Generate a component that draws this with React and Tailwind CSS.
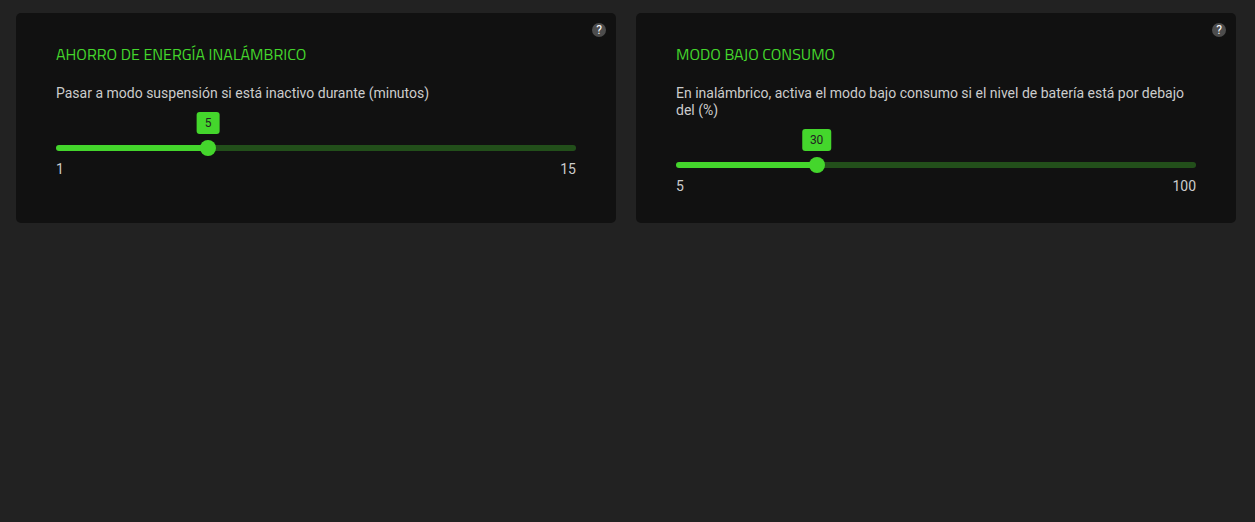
import { useState } from 'react';

const THUMB_SIZE = 16;

function HelpButton({ label }) {
  return (
    <button
      type="button"
      aria-label={label}
      className="absolute top-[10px] right-[10px] flex size-3.5 items-center justify-center rounded-full bg-[#4d4d4d] text-xs leading-none text-white"
    >
      ?
    </button>
  );
}

function RangeSlider({ id, min, max, value, onChange }) {
  const ratio = (value - min) / (max - min);
  const position = `calc(${ratio * 100}% + ${THUMB_SIZE / 2 - ratio * THUMB_SIZE}px)`;

  return (
    <div className="relative pt-[38px]">
      <output
        htmlFor={id}
        className="absolute top-[10px] -translate-x-1/2 rounded-[3px] bg-[#44d62c] px-2 text-xs leading-[22px] text-[#222]"
        style={{ left: position }}
      >
        {value}
      </output>
      <input
        id={id}
        type="range"
        min={min}
        max={max}
        value={value}
        onChange={(e) => onChange(Number(e.target.value))}
        className="block h-4 w-full cursor-pointer appearance-none bg-transparent [&::-webkit-slider-runnable-track]:h-1.5 [&::-webkit-slider-runnable-track]:rounded-full [&::-webkit-slider-runnable-track]:[background:var(--track)] [&::-webkit-slider-thumb]:-mt-[5px] [&::-webkit-slider-thumb]:size-4 [&::-webkit-slider-thumb]:appearance-none [&::-webkit-slider-thumb]:rounded-full [&::-webkit-slider-thumb]:bg-[#44d62c]"
        style={{ '--track': `linear-gradient(to right, #44d62c ${position}, #224f1a ${position})` }}
      />
      <div className="mt-[5px] flex justify-between text-sm leading-[17px]">
        <span>{min}</span>
        <span>{max}</span>
      </div>
    </div>
  );
}

function SettingCard({ id, title, description, min, max, initial }) {
  const [value, setValue] = useState(initial);

  return (
    <section className="relative rounded-[5px] bg-[#111] px-10 pt-[31px] pb-7">
      <HelpButton label={`Ayuda: ${title}`} />
      <h2 className="mb-[21px] font-['Titillium_Web','Roboto',sans-serif] text-base leading-5 text-[#44d62c] uppercase">
        {title}
      </h2>
      <label htmlFor={id} className="block text-sm leading-[17px]">
        {description}
      </label>
      <RangeSlider id={id} min={min} max={max} value={value} onChange={setValue} />
    </section>
  );
}

export default function App() {
  return (
    <main className="min-h-screen bg-[#222] pt-[13px] pr-[19px] pb-4 pl-4 font-['Roboto',sans-serif] text-[#ccc]">
      <div className="grid grid-cols-2 gap-5">
        <SettingCard
          id="power-saving"
          title="Ahorro de energía inalámbrico"
          description="Pasar a modo suspensión si está inactivo durante (minutos)"
          min={1}
          max={15}
          initial={5}
        />
        <SettingCard
          id="low-power"
          title="Modo bajo consumo"
          description="En inalámbrico, activa el modo bajo consumo si el nivel de batería está por debajo del (%)"
          min={5}
          max={100}
          initial={30}
        />
      </div>
    </main>
  );
}
